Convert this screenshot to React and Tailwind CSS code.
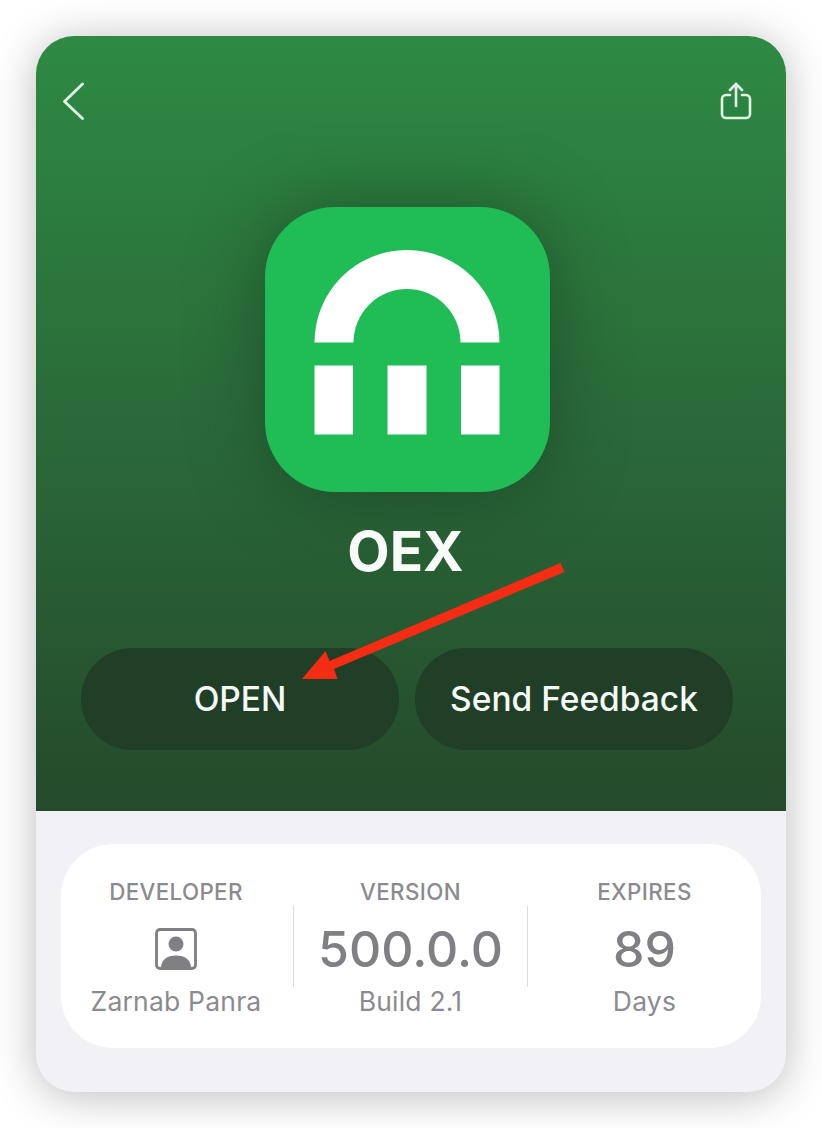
import React from 'react';

const font = { fontFamily: 'Inter, "Liberation Sans", sans-serif' };

// 뒤로가기 아이콘
const BackIcon = () => (
  <svg width="24" height="38" viewBox="0 0 24 38" fill="none" stroke="#e3f3e6" strokeWidth="2.800" strokeLinecap="round" strokeLinejoin="round">
    <path d="M20.500 2 2.500 19.500l18 17" />
  </svg>
);

// 공유 아이콘
const ShareIcon = () => (
  <svg width="32" height="38" viewBox="0 0 32 38" fill="none" stroke="#e3f3e6" strokeWidth="2.600" strokeLinecap="round" strokeLinejoin="round">
    <path d="M16 2v22" />
    <path d="M10 8l6-6 6 6" />
    <path d="M10 13H6a4 4 0 0 0-4 4v15a4 4 0 0 0 4 4h20a4 4 0 0 0 4-4V17a4 4 0 0 0-4-4h-4" />
  </svg>
);

// 앱 아이콘
const AppIcon = () => (
  <div className="mr-[8px] w-[285px] h-[285px] pb-[14px] rounded-[70px] bg-[#20bc55] shadow-[0_0_70px_rgba(20,50,28,0.5)] flex items-center justify-center">
    <svg width="186" height="186" viewBox="0 0 186 186" fill="#ffffff">
      <path d="M0.500 92.500a92.500 92.500 0 0 1 185 0h-39a53.500 53.500 0 0 0-107 0z" />
      <rect x="0.500" y="115.500" width="38.500" height="69" />
      <rect x="73.500" y="115.500" width="39" height="69" />
      <rect x="147" y="115.500" width="38.500" height="69" />
    </svg>
  </div>
);

// 빨간 화살표
const RedArrow = () => (
  <svg className="absolute left-[290px] top-[552px]" width="290" height="140" viewBox="290 552 290 140" fill="#f42c14">
    <path d="M560.500 563 564.500 572 334 669 337.500 679 302 679 325.500 651 329.500 661z" />
  </svg>
);

const ActionButton = ({ label }) => (
  <button className="w-[318px] h-[102px] rounded-[51px] bg-[#203f26] text-[#f6faf6] text-[33.500px] font-medium">
    {label}
  </button>
);

const InfoColumn = ({ label, sub, children, className }) => (
  <div className={`flex flex-col items-center ${className}`}>
    <div className="h-[34px] leading-[30px] text-[22.300px] font-medium tracking-[0.4px] text-[#8b8b8f]">{label}</div>
    <div className="h-[76px] flex items-center justify-center text-[#808084]">{children}</div>
    <div className="h-[28px] leading-[28px] text-[26.500px] tracking-[0.2px] text-[#8b8b8f]">{sub}</div>
  </div>
);

const Divider = () => <div className="w-px h-[81px] bg-[#dcdce0]" />;

const App = () => {
  return (
    <div className="relative w-[822px] h-[1128px] bg-white overflow-hidden" style={font}>
      <div className="absolute left-[36px] top-[36px] w-[750px] h-[1056px] rounded-[38px] bg-[#f1f1f6] shadow-[0_4px_44px_rgba(0,0,0,0.27)] overflow-hidden flex flex-col">
        {/* 상단 녹색 영역 */}
        <div className="h-[775px] bg-gradient-to-b from-[#2d8a43] via-[#2a6a39] to-[#244a2b] flex flex-col items-center">
          <div className="w-full h-[171px] pl-[26px] pr-[34px] pt-[46px] flex justify-between items-start">
            <BackIcon />
            <ShareIcon />
          </div>
          <AppIcon />
          <h1 className="mr-[11px] mt-[30px] h-[58px] leading-[58px] text-[55px] font-bold text-[#f8fbf8]">OEX</h1>
          <div className="mt-[68px] w-full pl-[45px] pr-[53px] flex justify-between">
            <ActionButton label="OPEN" />
            <ActionButton label="Send Feedback" />
          </div>
        </div>

        {/* 앱 정보 카드 */}
        <div className="mt-[33px] mx-[25px] h-[204px] rounded-[52px] bg-white flex items-center">
          <InfoColumn className="w-[232px] pr-[2px]" label="DEVELOPER" sub="Zarnab Panra">
            <svg width="42" height="42" viewBox="0 0 42 42" fill="none">
              <rect x="1.500" y="1.500" width="39" height="39" rx="3.500" stroke="#808084" strokeWidth="2.800" />
              <circle cx="21" cy="16" r="7.500" fill="#808084" />
              <path d="M6 40c0-8 6-12.500 15-12.500S36 32 36 40z" fill="#808084" />
            </svg>
          </InfoColumn>
          <Divider />
          <InfoColumn className="w-[233px]" label="VERSION" sub="Build 2.1">
            <span className="text-[50px] font-medium">500.0.0</span>
          </InfoColumn>
          <Divider />
          <InfoColumn className="w-[233px]" label="EXPIRES" sub="Days">
            <span className="text-[50px] font-medium">89</span>
          </InfoColumn>
        </div>
      </div>
      <RedArrow />
    </div>
  );
};

export default App;
